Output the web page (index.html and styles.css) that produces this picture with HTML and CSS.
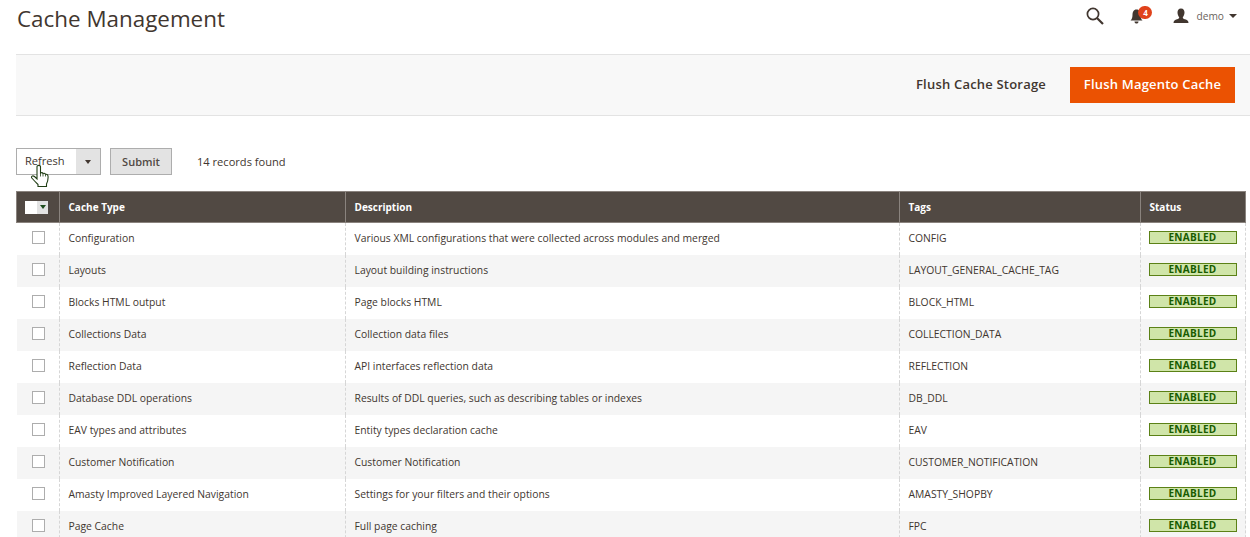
FILE: index.html
```html
<!DOCTYPE html>
<html lang="en">
<head>
<meta charset="utf-8">
<title>Cache Management</title>
<link rel="stylesheet" href="styles.css">
</head>
<body>
<header class="top">
  <h1 class="title">Cache Management</h1>
  <div class="tools">
    <svg class="ico-search" width="18" height="18" viewBox="0 0 18 18"><circle cx="7" cy="7" r="5.600" fill="none" stroke="#41362f" stroke-width="1.700"/><path d="M11 11L17 17" stroke="#41362f" stroke-width="2.200" fill="none"/></svg>
    <div class="bell">
      <svg width="13" height="15" viewBox="0 0 13 15"><path d="M6.500 0.500C9.500 0.500 10.500 3 10.500 6C10.500 9 11.500 10.500 12.500 11.500L0.500 11.500C1.500 10.500 2.500 9 2.500 6C2.500 3 3.500 0.500 6.500 0.500Z" fill="#41362f"/><path d="M4.500 12.500H8.500C8.500 14 7.500 14.500 6.500 14.500C5.500 14.500 4.500 14 4.500 12.500Z" fill="#41362f"/></svg>
      <span class="badge">4</span>
    </div>
    <div class="user">
      <svg width="16" height="16" viewBox="0 0 16 16"><path d="M8 0.500C10.500 0.500 11.500 2.500 11.500 4.500C11.500 6.500 10.500 8.500 9.800 9.200C9.800 10.200 10.500 10.800 12 11.300C14 12 15.500 12.500 15.500 15H0.500C0.500 12.500 2 12 4 11.300C5.500 10.800 6.200 10.200 6.200 9.200C5.500 8.500 4.500 6.500 4.500 4.500C4.500 2.500 5.500 0.500 8 0.500Z" fill="#41362f"/></svg>
      <span class="user-name">demo</span>
      <span class="caret"></span>
    </div>
  </div>
</header>

<section class="actions">
  <span class="link-btn">Flush Cache Storage</span>
  <span class="primary-btn">Flush Magento Cache</span>
</section>

<section class="controls">
  <div class="select">
    <span class="select-text">Refresh</span>
    <span class="select-arrow"><span class="caret small"></span></span>
    <svg class="pointer" width="18" height="24" viewBox="0 0 18 24"><path d="M6 2.500C6 1 9.500 1 9.500 2.500V9C10.500 8.500 11.500 8.500 12 9.500C13 9 14 9.300 14.500 10.300C15.500 10 16.800 10.500 17 12C17.300 14.500 17 17 15.500 20V22.500H7V20.500C5 18.500 3 16.500 0.800 14C0 12.500 1.500 11 3.500 12.500L6 15Z" fill="#fff" stroke="#1f3d14" stroke-width="1.100"/><path d="M9.500 9V12.500M12 9.500V12.500M14.500 10.300V12.500" stroke="#1f3d14" stroke-width="0.800" fill="none"/></svg>
  </div>
  <span class="submit">Submit</span>
  <span class="records">14 records found</span>
</section>

<table class="grid">
  <colgroup><col class="c1"><col class="c2"><col class="c3"><col class="c4"><col class="c5"></colgroup>
  <thead>
    <tr>
      <th class="check-head"><span class="multi"><span class="multi-box"></span><span class="multi-arrow"></span></span></th>
      <th>Cache Type</th><th>Description</th><th>Tags</th><th>Status</th>
    </tr>
  </thead>
  <tbody>
    <tr><td class="check"><span class="box"></span></td><td>Configuration</td><td>Various XML configurations that were collected across modules and merged</td><td>CONFIG</td><td><span class="enabled">ENABLED</span></td></tr>
    <tr><td class="check"><span class="box"></span></td><td>Layouts</td><td>Layout building instructions</td><td>LAYOUT_GENERAL_CACHE_TAG</td><td><span class="enabled">ENABLED</span></td></tr>
    <tr><td class="check"><span class="box"></span></td><td>Blocks HTML output</td><td>Page blocks HTML</td><td>BLOCK_HTML</td><td><span class="enabled">ENABLED</span></td></tr>
    <tr><td class="check"><span class="box"></span></td><td>Collections Data</td><td>Collection data files</td><td>COLLECTION_DATA</td><td><span class="enabled">ENABLED</span></td></tr>
    <tr><td class="check"><span class="box"></span></td><td>Reflection Data</td><td>API interfaces reflection data</td><td>REFLECTION</td><td><span class="enabled">ENABLED</span></td></tr>
    <tr><td class="check"><span class="box"></span></td><td>Database DDL operations</td><td>Results of DDL queries, such as describing tables or indexes</td><td>DB_DDL</td><td><span class="enabled">ENABLED</span></td></tr>
    <tr><td class="check"><span class="box"></span></td><td>EAV types and attributes</td><td>Entity types declaration cache</td><td>EAV</td><td><span class="enabled">ENABLED</span></td></tr>
    <tr><td class="check"><span class="box"></span></td><td>Customer Notification</td><td>Customer Notification</td><td>CUSTOMER_NOTIFICATION</td><td><span class="enabled">ENABLED</span></td></tr>
    <tr><td class="check"><span class="box"></span></td><td>Amasty Improved Layered Navigation</td><td>Settings for your filters and their options</td><td>AMASTY_SHOPBY</td><td><span class="enabled">ENABLED</span></td></tr>
    <tr><td class="check"><span class="box"></span></td><td>Page Cache</td><td>Full page caching</td><td>FPC</td><td><span class="enabled">ENABLED</span></td></tr>
  </tbody>
</table>
</body>
</html>
```

FILE: styles.css
```css
html, body { margin: 0; padding: 0; height: 537px; overflow: hidden; background: #fff; }
body { font-family: "Open Sans", sans-serif; font-size: 10px; color: #41362f; }

.top { height: 54px; display: flex; justify-content: space-between; align-items: flex-start; padding: 0 13px 0 17px; }
.title { margin: 0; padding-top: 4px; font-size: 22.400px; line-height: 30px; font-weight: 400; color: #41362f; }
.tools { display: flex; align-items: center; height: 32px; }
.ico-search { margin-right: 26px; }
.bell { position: relative; display: flex; margin-right: 30px; }
.badge { position: absolute; left: 8px; top: -3px; width: 14px; height: 13px; border-radius: 7px; background: #e0421b; color: #fff; font-size: 8px; font-weight: 700; line-height: 13px; text-align: center; }
.user { display: flex; align-items: center; }
.user-name { margin-left: 7px; font-size: 10.200px; color: #6b635d; }
.caret { display: inline-block; width: 0; height: 0; border-left: 4px solid transparent; border-right: 4px solid transparent; border-top: 4px solid #41362f; margin-left: 5px; }
.caret.small { margin: 0; border-left-width: 3px; border-right-width: 3px; }

.actions { height: 60px; background: #f8f8f8; border-top: 1px solid #e3e3e3; border-bottom: 1px solid #e3e3e3; margin-left: 16px; display: flex; align-items: center; justify-content: flex-end; padding-right: 15px; }
.link-btn { font-size: 13px; font-weight: 600; color: #41362f; letter-spacing: 0.200px; margin-right: 24px; margin-bottom: 2px; }
.primary-btn { box-sizing: border-box; width: 165px; height: 36px; padding-bottom: 2px; background: #eb5202; color: #fff; font-size: 13px; font-weight: 600; letter-spacing: 0.200px; display: flex; align-items: center; justify-content: center; }

.controls { margin-top: 32px; margin-left: 16px; height: 27px; display: flex; align-items: center; }
.select { position: relative; width: 83px; height: 25px; border: 1px solid #adadad; display: flex; background: #fff; }
.select-text { flex: 1; padding-left: 8px; font-size: 11.100px; line-height: 23px; color: #41362f; }
.select-arrow { width: 24px; background: #e3e3e3; display: flex; align-items: center; justify-content: center; }
.pointer { position: absolute; left: 14px; top: 15px; }
.submit { margin-left: 9px; width: 60px; height: 25px; border: 1px solid #adadad; background: #e3e3e3; font-size: 11px; font-weight: 600; line-height: 25px; text-align: center; color: #514943; }
.records { margin-left: 25px; font-size: 11.100px; color: #41362f; }

.grid { margin-top: 16px; margin-left: 16px; width: 1229px; border-collapse: collapse; table-layout: fixed; }
.c1 { width: 43px; } .c2 { width: 286px; } .c3 { width: 554px; } .c4 { width: 241px; } .c5 { width: 105px; }
.grid th { height: 30px; padding: 0 0 0 8.500px; background: #514943; color: #fff; font-size: 10px; font-weight: 700; text-align: left; border: 1px solid #8a837e; }
.grid td { height: 30px; padding: 0 0 2px 8.500px; font-size: 10.350px; color: #41362f; border-left: 1px dashed #d6d6d6; border-right: 1px dashed #d6d6d6; }
.grid td:first-child { border-left: 0; }
.grid tbody tr:nth-child(even) td { background: #f5f5f5; }
.grid th.check-head { padding: 0 0 0 8px; }
.grid td.check { padding: 0 0 2px 15px; }
.box { display: block; width: 11px; height: 11px; margin-top: -1px; border: 1px solid #adadad; background: #fff; }
.multi { display: flex; height: 13px; width: 23px; }
.multi-box { width: 12px; background: #fff; }
.multi-arrow { width: 11px; background: #e3e3e3; position: relative; }
.multi-arrow::after { content: ""; position: absolute; left: 2.500px; top: 4px; border-left: 3px solid transparent; border-right: 3px solid transparent; border-top: 4px solid #1f4d1f; }
.enabled { display: block; width: 86px; height: 11px; margin: -2px 0 0 -1px; background: #d0e5a9; border: 1px solid #5b8116; color: #185b00; font-size: 10px; font-weight: 700; line-height: 10px; letter-spacing: 0.300px; text-align: center; }
```
